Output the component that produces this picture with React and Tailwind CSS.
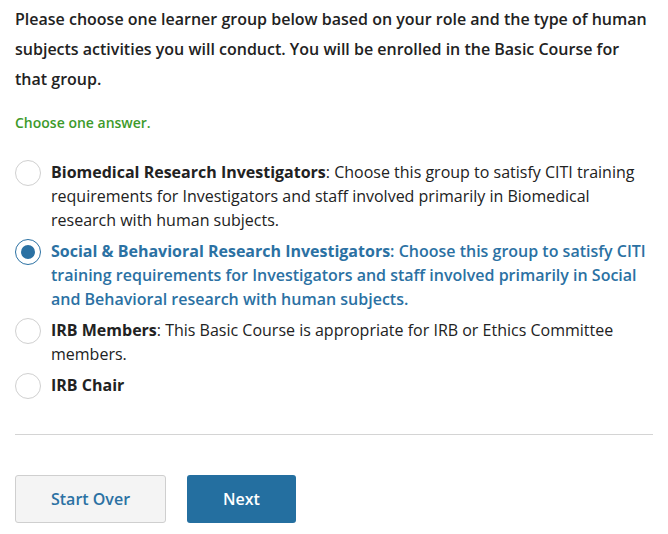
import React from "react";

const options = [
  {
    title: "Biomedical Research Investigators",
    text: ": Choose this group to satisfy CITI training requirements for Investigators and staff involved primarily in Biomedical research with human subjects.",
    checked: false,
  },
  {
    title: "Social & Behavioral Research Investigators",
    text: ": Choose this group to satisfy CITI training requirements for Investigators and staff involved primarily in Social and Behavioral research with human subjects.",
    checked: true,
  },
  {
    title: "IRB Members",
    text: ": This Basic Course is appropriate for IRB or Ethics Committee members.",
    checked: false,
  },
  { title: "IRB Chair", text: "", checked: false },
];

export default function App() {
  return (
    <div
      className="w-[668px] h-[534px] bg-white px-[15px] pt-1 text-[#222]"
      style={{ fontFamily: '"Open Sans", sans-serif' }}
    >
      <p className="text-[16px] leading-[30px] font-semibold">
        Please choose one learner group below based on your role and the type of human subjects activities you will conduct. You will be enrolled in the Basic Course for that group.
      </p>
      <p className="mt-[19px] text-[14px] leading-[20px] font-semibold text-[#3d9a2b]">
        Choose one answer.
      </p>
      <div className="mt-[27px] flex flex-col gap-[7px]">
        {options.map((o) => (
          <label key={o.title} className="flex items-start gap-[10px]">
            <span
              className={
                "shrink-0 w-[26px] h-[26px] rounded-full bg-white flex items-center justify-center border " +
                (o.checked ? "border-[#2b71a3]" : "border-[#d0d0d0]")
              }
            >
              {o.checked && <span className="w-[14px] h-[14px] rounded-full bg-[#2b71a3]" />}
            </span>
            <span
              className={
                "text-[16px] leading-[24px] " +
                (o.checked ? "text-[#2b71a3] font-semibold" : "text-[#222]")
              }
            >
              <b className="font-bold">{o.title}</b>
              {o.text}
            </span>
          </label>
        ))}
      </div>
      <div className="mt-[35px] border-t border-[#d4d4d4]" />
      <div className="mt-[40px] flex gap-[21px]">
        <button className="w-[151px] h-[48px] rounded-[3px] border border-[#cfcfcf] bg-[#f4f4f4] text-[#2b71a3] text-[16px] font-semibold">
          Start Over
        </button>
        <button className="w-[109px] h-[48px] rounded-[3px] bg-[#246fa0] text-white text-[16px] font-semibold">
          Next
        </button>
      </div>
    </div>
  );
}
